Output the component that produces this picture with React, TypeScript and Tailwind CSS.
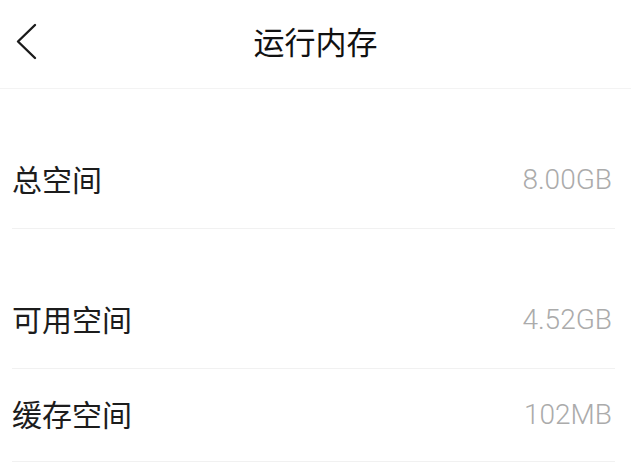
const CJK = "font-['Noto_Sans_CJK_SC','Noto_Sans',sans-serif]";

type Row = { label: string; value: string };

const groups: { rows: Row[] }[] = [
  { rows: [{ label: "总空间", value: "8.00GB" }] },
  {
    rows: [
      { label: "可用空间", value: "4.52GB" },
      { label: "缓存空间", value: "102MB" },
    ],
  },
];

function BackIcon() {
  return (
    <svg width="24" height="38" viewBox="0 0 24 38" fill="none">
      <polyline
        points="21,2 4,18.5 21,35"
        stroke="#1a1a1a"
        strokeWidth="2.4"
        strokeLinecap="round"
        strokeLinejoin="round"
      />
    </svg>
  );
}

function InfoRow({ row, height }: { row: Row; height: string }) {
  return (
    <div
      className={`ml-[12px] mr-[16px] flex items-center justify-between border-b border-[#f1f1f1] ${height}`}
    >
      <span className={`${CJK} mb-[4px] text-[30px] leading-none text-[#1c1c1c]`}>
        {row.label}
      </span>
      <span className="pr-[3px] font-['Roboto','Liberation_Sans',sans-serif] text-[28px] font-light leading-none text-[#ababab]">
        {row.value}
      </span>
    </div>
  );
}

export default function App() {
  return (
    <main className="min-h-[466px] w-full bg-white">
      <header className="relative flex h-[89px] items-center justify-center border-b border-[#f3f3f3]">
        <button type="button" className="absolute left-[14px] top-[23px]">
          <BackIcon />
        </button>
        <h1 className={`${CJK} mb-[7px] text-[31px] font-normal leading-none text-[#111]`}>
          运行内存
        </h1>
      </header>

      {groups.map((group, gi) => (
        <section key={gi} className="mt-[42px]">
          {group.rows.map((row, ri) => (
            <InfoRow
              key={row.label}
              row={row}
              height={gi === 1 && ri === 1 ? "h-[93px]" : "h-[98px]"}
            />
          ))}
        </section>
      ))}
    </main>
  );
}
